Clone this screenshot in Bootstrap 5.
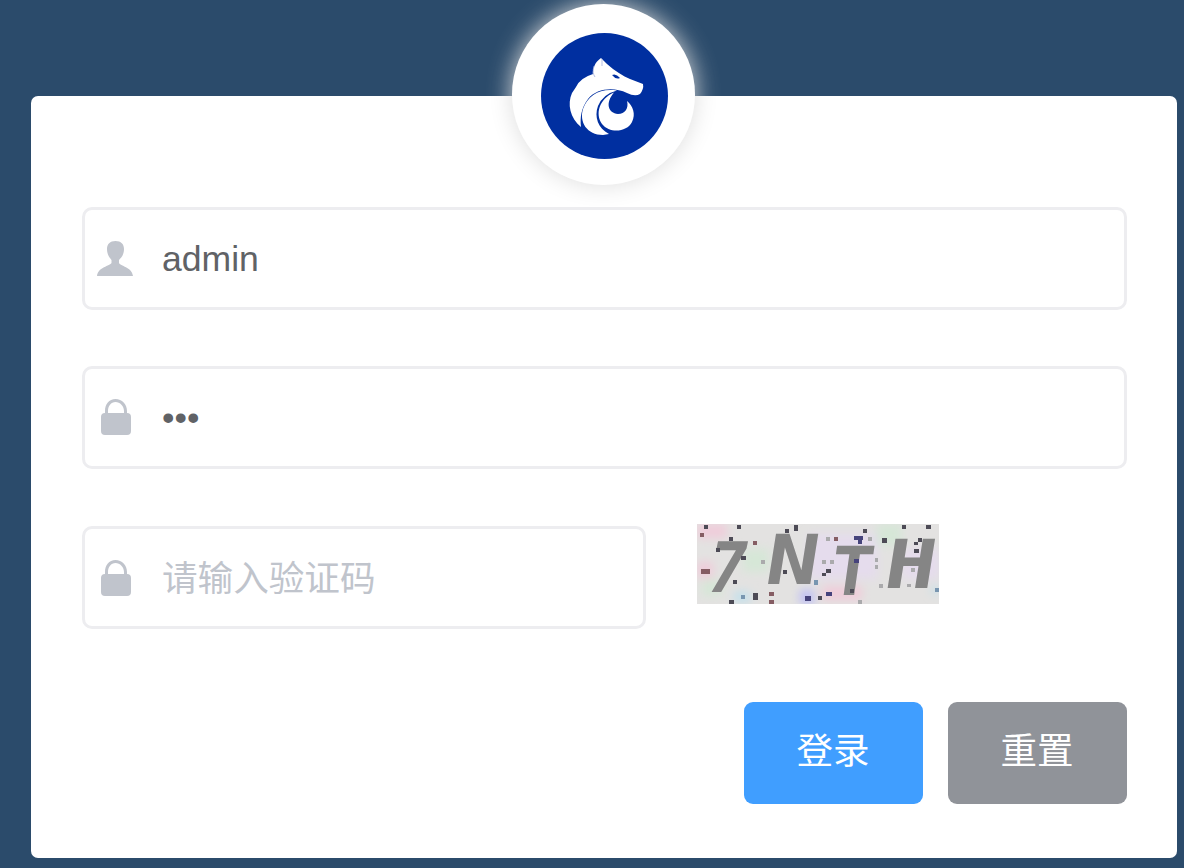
<!DOCTYPE html>
<html lang="zh-CN">
<head>
<meta charset="utf-8">
<title>登录</title>
<link href="https://cdn.jsdelivr.net/npm/bootstrap@5.3.0/dist/css/bootstrap.min.css" rel="stylesheet">
<style>
body{background:#2b4b6b;font-family:"Liberation Sans","Noto Sans CJK SC",sans-serif;height:868px;overflow:hidden;padding:96px 7px 0 31px}
.login-box{width:1146px;height:762px;border:0;border-radius:7px;padding:111px 50.5px 0 51px}
.avatar{width:183px;height:181px;left:481px;top:-92px;padding:29px 27px 26px 29px;box-shadow:0 0 25px #ddd}
.login-field{height:103px;border:3px solid #ededf0;border-radius:10px;padding-left:12px}
.login-field svg{width:40px;height:40px;flex:none;fill:#c0c4cc}
.login-field input{font-size:35.6px;color:#606266;margin-left:25px;line-height:44px;height:60px;min-width:0;padding:2px 0 0;background:none;border:0;outline:0}
.login-field input[type=password]{padding:1px 0 0}
.login-field input::placeholder{color:#c0c4cc;opacity:1}
.user-row{margin-bottom:56px}
.pass-row{margin-bottom:57px}
.code-field{width:564px;padding-top:2px}
.captcha{width:242px;height:80px;margin:-2px 0 0 51px;overflow:visible}
.actions{margin-top:73px;gap:25px}
.actions .btn{width:179px;height:102px;border:0;border-radius:9px;font-size:36.5px;color:#fff;padding:0 0 2px}
.btn-login{background:#409eff}
.btn-reset{background:#909399}
</style>
</head>
<body>
<main class="login-box card position-relative">
  <div class="avatar position-absolute bg-white rounded-circle">
    <svg class="d-block w-100 h-100" viewBox="0 0 127 126" preserveAspectRatio="none">
      <ellipse cx="63.5" cy="63" rx="63.5" ry="63" fill="#002fa0"/>
      <path fill="#fff" d="M52 43C51 36 54 29 60 25L66 31C74 38 82 43 89 46L102 51Q103 56 99 61Q94 64 86 60C73 54 56 55 47 66C40 75 39 85 40 94C29 85 26 71 31 60L35 54Q39 45 52 41Z"/>
      <path fill="#fff" d="M76 57.500C59 55 47 62 42 76C38 89 46 102 62 102L68 101C57 95 53 84 57 73Q62 61 76 57.500Z"/>
      <path fill="#fff" d="M73 59.500C58 66 54 81 61 91C69 101 86 99 91 89C95 81 92 73 86 68C88 75 84 81 77 81C67 80 64 70 73 59.500Z"/>
      <path fill="#002fa0" d="M71 42Q75 40 79 45Q75 47 71 42Z"/>
      <path d="M61 26V33M53 33Q51 40 54 44" fill="none" stroke="#a3afdc" stroke-width=".8"/>
    </svg>
  </div>
  <form onsubmit="return false">
    <div class="login-field user-row d-flex align-items-center">
      <svg viewBox="0 0 40 40"><path d="M18.500 2C13 2 10 5 10 10C10 15 12 18 14.500 21V24C13 27 1 28 0 37H36C35 28 23 27 22 24V21C25 18 27 15 27 10C27 5 24 2 18.500 2Z"/></svg>
      <input class="flex-grow-1" type="text" value="admin" aria-label="用户名">
    </div>
    <div class="login-field pass-row d-flex align-items-center">
      <svg viewBox="0 0 40 40"><path d="M8 15V13C8 6 12 1 18.500 1S30 6 30 13V15Q34 15 34 19V33Q34 37 30 37H8Q4 37 4 33V19Q4 15 8 15ZM11 15H27V13C27 8 23 4 18.500 4S11 8 11 13Z"/></svg>
      <input class="flex-grow-1" type="password" value="123" aria-label="密码">
    </div>
    <div class="d-flex align-items-start">
      <div class="login-field code-field d-flex align-items-center">
        <svg viewBox="0 0 40 40"><path d="M8 15V13C8 6 12 1 18.500 1S30 6 30 13V15Q34 15 34 19V33Q34 37 30 37H8Q4 37 4 33V19Q4 15 8 15ZM11 15H27V13C27 8 23 4 18.500 4S11 8 11 13Z"/></svg>
        <input class="flex-grow-1" type="text" placeholder="请输入验证码">
      </div>
      <svg class="captcha" viewBox="0 0 242 80">
        <defs>
          <filter id="soft" x="-20%" y="-20%" width="140%" height="140%"><feGaussianBlur stdDeviation="5"/></filter>
          <clipPath id="frame"><path d="M0 0H242V80H0Z"/></clipPath>
        </defs>
        <path fill="#e3e2e1" d="M0 0H242V80H0Z"/>
        <g clip-path="url(#frame)"><g filter="url(#soft)">
          <path fill="#f0ccda" d="M0 0H30V14H0ZM0 38H16V54H0ZM125 62H165V76H125Z"/>
          <path fill="#d6e7d7" d="M46 25H72V48H46ZM180 0H205V22H180ZM5 56H25V72H5Z"/>
          <path fill="#e5dced" d="M112 10H180V55H112ZM205 25H242V55H205Z"/>
          <path fill="#bdbdf6" d="M103 66H117V80H103Z"/><path fill="#bfe0ed" d="M37 68H53V78H37ZM235 62H242V70H235Z"/>
        </g></g>
        <g fill="#858585" font-family="DejaVu Sans Mono" font-weight="700" font-size="65">
          <text transform="translate(6 68) skewX(-12) scale(1 1.07)">7</text>
          <text transform="translate(66 60) skewX(-9) scale(1.34 1.06)">N</text>
          <text transform="translate(130 71) skewX(-8) scale(1.12 1.04)">T</text>
          <text transform="translate(185 64) skewX(-9) scale(1.3 1.04)">H</text>
        </g>
        <g fill="#4d4b56">
          <path d="M7 1h4v4h-4zM40 1h4v4h-4zM97 1h4v6h-4zM88 5h4v4h-4zM205 1h4v4h-4zM229 1h5v4h-5zM166 5h4v4h-4zM32 13h4v4h-4zM44 32h5v4h-5zM19 24h4v4h-4zM129 45h5v4h-5zM125 49h4v3h-4zM36 56h4v4h-4zM56 69h5v7h-5zM32 76h5v4h-5zM121 72h4v4h-4zM217 25h5v4h-5zM217 18h4v3h-4zM221 14h4v4h-4zM185 14h5v5h-5zM153 65h4v4h-4zM86 46h4v4h-4z"/>
          <path fill="#46437c" d="M157 12h9v4h-9zM161 16h4v4h-4zM157 35h5v4h-5zM108 72h6v5h-6zM129 68h6v4h-6z"/>
          <path fill="#855d63" d="M4 45h9v5h-9zM3 9h4v4h-4zM56 17h4v4h-4zM72 68h5v4h-5zM72 76h5v4h-5zM137 13h4v4h-4z"/>
          <path fill="#aaaaac" d="M64 36h4v4h-4zM125 36h4v4h-4zM133 36h4v4h-4zM129 13h4v4h-4zM171 13h4v4h-4zM178 34h3v4h-3zM178 41h3v4h-3zM182 60h4v4h-4zM214 44h4v4h-4zM210 60h4v3h-4zM161 76h4v4h-4z"/>
          <path fill="#7896b0" d="M44 71h4v4h-4zM117 56h4v5h-4zM238 64h4v4h-4z"/>
        </g>
      </svg>
    </div>
    <div class="actions d-flex justify-content-end">
      <button class="btn btn-login">登录</button>
      <button class="btn btn-reset">重置</button>
    </div>
  </form>
</main>
<script src="https://cdn.jsdelivr.net/npm/bootstrap@5.3.0/dist/js/bootstrap.bundle.min.js"></script>
</body>
</html>
